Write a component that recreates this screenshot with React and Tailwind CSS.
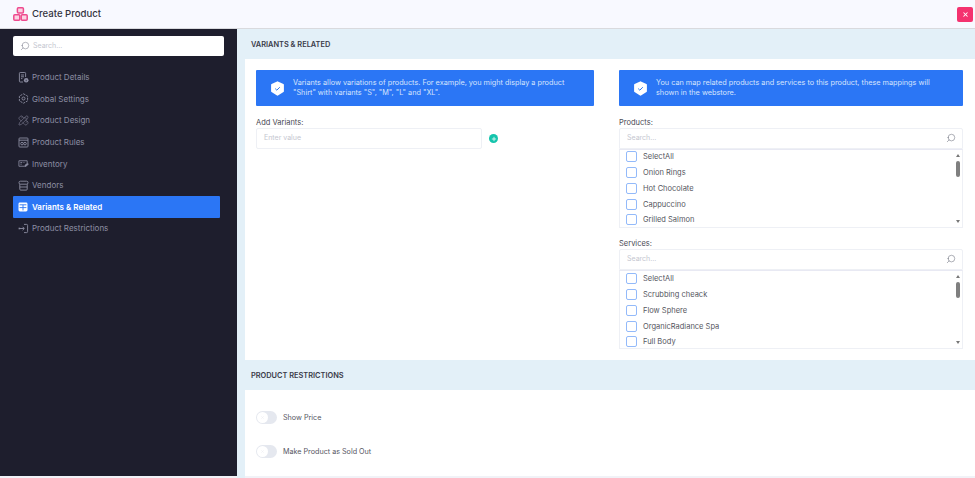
import React from "react";
import { PencilRuler, Search, X, Plus } from "lucide-react";

// hand drawn nav icons, the package has no close match for these
const DetailsIcon = () => (
  <svg width="11" height="11" viewBox="0 0 11 11" fill="none" stroke="currentColor" strokeWidth="0.9">
    <path d="M5 10H2.2a.8.8 0 0 1-.8-.8V1.3a.8.8 0 0 1 .8-.8h4.6a.8.8 0 0 1 .8.8V5" />
    <path d="M3 3h3M3 4.8h3M3 6.6h1.4" />
    <circle cx="8.2" cy="8.2" r="2.3" fill="currentColor" stroke="none" />
    <path d="M8.2 7.4v.2M8.2 8.2v1" stroke="#1e1e2d" />
  </svg>
);

const GearIcon = () => (
  <svg width="11" height="11" viewBox="0 0 11 11" fill="none" stroke="currentColor" strokeWidth="0.9">
    <path d="M5.5.8 9.6 3.1v4.8l-4.1 2.3-4.1-2.3V3.1Z" strokeDasharray="2.2 0.9" />
    <circle cx="5.5" cy="5.5" r="1.5" />
  </svg>
);

const RulesIcon = () => (
  <svg width="11" height="11" viewBox="0 0 11 11" fill="none" stroke="currentColor" strokeWidth="0.9">
    <rect x="1" y="1" width="9" height="9" rx="0.8" />
    <path d="M1 3.2h9" />
    <circle cx="4" cy="6.6" r="1.3" />
    <circle cx="7" cy="6.6" r="1.3" />
  </svg>
);

const InventoryIcon = () => (
  <svg width="12" height="11" viewBox="0 0 12 11" fill="none" stroke="currentColor" strokeWidth="0.9">
    <path d="M7 8.5H1V2.5h9v2.6" />
    <path d="M2.6 4.4h2M2.6 6.2h1.4M6 4.4h1" />
    <path d="m7.4 8.8.3-1.4 2.6-2.2 1 1.1-2.6 2.2Z" fill="currentColor" />
  </svg>
);

const VendorsIcon = () => (
  <svg width="11" height="11" viewBox="0 0 11 11" fill="none" stroke="currentColor" strokeWidth="0.9">
    <rect x="1" y="1.2" width="9" height="3" rx="1.4" />
    <path d="M1.8 4.2v5a.9.9 0 0 0 .9.9h5.6a.9.9 0 0 0 .9-.9v-5M1.8 7h7.4" />
  </svg>
);

const VariantsIcon = () => (
  <svg width="11" height="10" viewBox="0 0 11 10">
    <rect x="0.5" y="0.5" width="9" height="9" rx="1.4" fill="#fff" />
    <path d="M5 2.8v5.6M1.6 2.8h6.8M1.6 5.6h6.8" stroke="#2b76f5" strokeWidth="0.9" />
  </svg>
);

const RestrictIcon = () => (
  <svg width="11" height="11" viewBox="0 0 11 11" fill="none" stroke="currentColor" strokeWidth="0.9">
    <path d="M6 1.4h2.6a1 1 0 0 1 1 1v6.2a1 1 0 0 1-1 1H6" />
    <path d="M1 5.5h5M4.6 3.8l1.7 1.7-1.7 1.7" />
    <rect x="0.6" y="4.7" width="1.6" height="1.6" fill="currentColor" stroke="none" />
  </svg>
);

const DesignIcon = () => <PencilRuler size={11} strokeWidth={1.2} />;

const navItems = [
  { label: "Product Details", icon: DetailsIcon },
  { label: "Global Settings", icon: GearIcon },
  { label: "Product Design", icon: DesignIcon },
  { label: "Product Rules", icon: RulesIcon },
  { label: "Inventory", icon: InventoryIcon },
  { label: "Vendors", icon: VendorsIcon },
  { label: "Variants & Related", icon: VariantsIcon, active: true },
  { label: "Product Restrictions", icon: RestrictIcon },
];

const products = ["SelectAll", "Onion Rings", "Hot Chocolate", "Cappuccino", "Grilled Salmon"];
const services = ["SelectAll", "Scrubbing cheack", "Flow Sphere", "OrganicRadiance Spa", "Full Body"];

function Logo() {
  return (
    <svg width="15" height="14" viewBox="0 0 15 14" fill="#fbd3e3" stroke="#ee4a8e" strokeWidth="1.5">
      <rect x="4.4" y="0.8" width="6" height="5.2" rx="1" />
      <rect x="0.8" y="7.8" width="6" height="5.4" rx="1" />
      <rect x="8.2" y="7.8" width="6" height="5.4" rx="1" />
    </svg>
  );
}

function Badge() {
  return (
    <svg width="15" height="15" viewBox="0 0 15 15" className="shrink-0">
      <path
        d="M7.5 1.2 13 3.9v6.4l-5.5 3.5L2 10.3V3.9Z"
        fill="#fff"
        stroke="#fff"
        strokeWidth="1.8"
        strokeLinejoin="round"
      />
      <path d="m5.2 7.6 1.6 1.6 3-3" fill="none" stroke="#2b76f0" strokeWidth="1" />
    </svg>
  );
}

function Banner({ children }) {
  return (
    <div className="flex h-[36px] items-center gap-[8px] rounded-[1px] bg-[#2b76f5] pl-[14px] pr-3">
      <Badge />
      <p className="text-[7.3px] leading-[10px] text-[#d6e4fd]">{children}</p>
    </div>
  );
}

function SectionHeader({ children }) {
  return (
    <div className="flex h-[30px] items-center bg-[#e3f0f8] pl-[14px] pt-[1px] text-[7.4px] font-semibold text-[#3a3a48]">
      {children}
    </div>
  );
}

function PickList({ label, items, className, rowsClass }) {
  return (
    <div className={className}>
      <div className="h-[11px] text-[7.5px] leading-[11px] text-[#4a4a55]">{label}</div>
      <div className="flex h-[21px] items-center justify-between rounded-t-[2px] border border-[#eef0f5] bg-white pb-[1px] pl-[7px] pr-[6px]">
        <span className="text-[7px] text-[#c4c6cf]">Search...</span>
        <Search size={10} strokeWidth={1.2} className="-scale-x-100 text-[#5f6270]" />
      </div>
      <div className="flex h-[79px] border border-t-[#e8e9f3] border-x-[#eef0f5] border-b-[#eef0f5] bg-white">
        <div className={`flex-1 pl-[6px] ${rowsClass}`}>
          {items.map((item) => (
            <div key={item} className="flex h-[15.75px] items-center gap-[6px]">
              <span className="h-[11px] w-[11px] rounded-[2px] border border-[#93bafa] bg-white" />
              <span className="text-[7.5px] text-[#555660]">{item}</span>
            </div>
          ))}
        </div>
        <div className="flex w-[7px] flex-col items-center pr-[1px] pt-[4px]">
          <span className="h-0 w-0 border-x-[2px] border-b-[3px] border-x-transparent border-b-[#777]" />
          <span className="mt-[4px] h-[16px] w-[4px] rounded-[2px] bg-[#7f7f7f]" />
          <span className="mt-[43px] h-0 w-0 border-x-[2px] border-t-[3px] border-x-transparent border-t-[#777]" />
        </div>
      </div>
    </div>
  );
}

function Toggle({ label }) {
  return (
    <div className="flex items-center gap-[6px]">
      <span className="flex h-[13px] w-[21px] items-center rounded-full bg-[#e5e8ef] pl-[1px]">
        <span className="flex h-[11px] w-[11px] items-center justify-center rounded-full bg-white">
          <X size={5} strokeWidth={1} className="text-[#d8dae2]" />
        </span>
      </span>
      <span className="pt-[1px] text-[7.2px] text-[#55565f]">{label}</span>
    </div>
  );
}

export default function App() {
  return (
    <div
      className="flex h-[478px] w-[975px] flex-col overflow-hidden bg-[#f1f2f7]"
      style={{ fontFamily: "Inter, 'Open Sans', sans-serif" }}
    >
      <header className="flex h-[29px] shrink-0 items-center justify-between border-b border-[#d9dade] bg-[#f8f9ff] pl-[13px] pr-[2px]">
        <div className="flex items-center gap-[4px]">
          <Logo />
          <h1 className="text-[9.6px] font-medium text-[#33333d]">Create Product</h1>
        </div>
        <button className="flex h-[15px] w-[16px] items-center justify-center rounded-[2px] bg-[#f4326f]">
          <X size={7} strokeWidth={3.5} className="text-white" />
        </button>
      </header>

      <div className="flex h-[447px] shrink-0">
        <aside className="w-[237px] shrink-0 bg-[#1e1e2d] pl-[13px] pt-[7px]">
          <div className="flex h-[20px] w-[211px] items-center gap-[3px] rounded-[2px] bg-white pl-[7px]">
            <Search size={10} strokeWidth={1.2} className="-scale-x-100 text-[#6f7180]" />
            <span className="text-[7px] text-[#c4c6cf]">Search...</span>
          </div>
          <nav className="mt-[10.5px] w-[207px]">
            {navItems.map(({ label, icon: Icon, active }) => (
              <div
                key={label}
                className={`flex h-[21.6px] items-center gap-[3px] rounded-[1px] pl-[5px] text-[8px] ${
                  active ? "bg-[#2b76f5] font-semibold text-white" : "text-[#8d8ea3]"
                }`}
              >
                <span className="flex w-[11px] justify-center">
                  <Icon />
                </span>
                <span>{label}</span>
              </div>
            ))}
          </nav>
        </aside>

        <main className="min-w-0 flex-1 bg-white">
          <SectionHeader>VARIANTS &amp; RELATED</SectionHeader>
          <div className="flex h-[301px] border-l-[8px] border-[#e3f0f8] pl-[11px] pt-[11px]">
            <div className="w-[338px] shrink-0">
              <Banner>
                Variants allow variations of products. For example, you might display a product
                <br />
                "Shirt" with variants "S", "M", "L" and "XL".
              </Banner>
              <div className="mt-[11px] h-[11px] text-[7.5px] leading-[11px] text-[#4a4a55]">Add Variants:</div>
              <div className="flex items-center gap-[7px]">
                <div className="flex h-[21px] w-[226px] items-center rounded-[2px] border border-[#eef0f5] pl-[7px] text-[7px] text-[#c4c6cf]">
                  Enter value
                </div>
                <span className="flex h-[9px] w-[9px] items-center justify-center rounded-full bg-[#14c4ac]">
                  <Plus size={6} strokeWidth={3} className="text-white" />
                </span>
              </div>
            </div>
            <div className="ml-[25px] w-[344px] shrink-0">
              <Banner>
                You can map related products and services to this product, these mappings will
                <br />
                shown in the webstore.
              </Banner>
              <PickList label="Products:" items={products} className="mt-[11px]" rowsClass="-mt-[1px]" />
              <PickList label="Services:" items={services} className="mt-[10px]" rowsClass="mt-0" />
            </div>
          </div>
          <SectionHeader>PRODUCT RESTRICTIONS</SectionHeader>
          <div className="flex flex-col gap-[21px] border-l-[8px] border-[#e3f0f8] pl-[11px] pt-[21px] pb-[25px]">
            <Toggle label="Show Price" />
            <Toggle label="Make Product as Sold Out" />
          </div>
        </main>
      </div>
    </div>
  );
}
